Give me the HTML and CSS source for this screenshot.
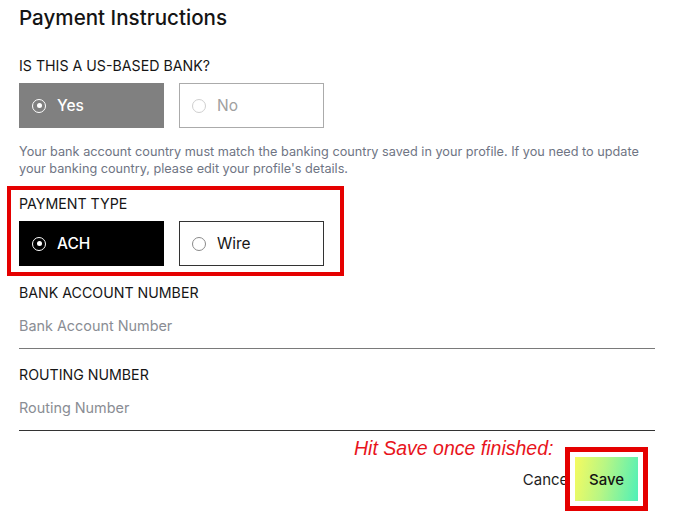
FILE: index.html
```html
<!DOCTYPE html>
<html lang="en">
<head>
<meta charset="utf-8">
<title>Payment Instructions</title>
<link rel="stylesheet" href="styles.css">
</head>
<body>
<div class="page">
  <h1 class="title">Payment Instructions</h1>

  <section class="group">
    <div class="label">IS THIS A US-BASED BANK?</div>
    <div class="options">
      <div class="option option-gray"><span class="radio radio-on"></span><span>Yes</span></div>
      <div class="option option-disabled"><span class="radio radio-light"></span><span>No</span></div>
    </div>
  </section>

  <p class="help">Your bank account country must match the banking country saved in your profile. If you need to update your banking country, please edit your profile's details.</p>

  <section class="group highlight">
    <div class="label">PAYMENT TYPE</div>
    <div class="options">
      <div class="option option-black"><span class="radio radio-on"></span><span>ACH</span></div>
      <div class="option option-outline"><span class="radio radio-off"></span><span>Wire</span></div>
    </div>
  </section>

  <div class="field field-first">
    <div class="label">BANK ACCOUNT NUMBER</div>
    <div class="input input-light">Bank Account Number</div>
  </div>

  <div class="field">
    <div class="label">ROUTING NUMBER</div>
    <div class="input input-dark">Routing Number</div>
  </div>

  <div class="annotation">Hit Save once finished:</div>

  <div class="actions">
    <button class="btn-cancel" type="button">Cancel</button>
    <div class="save-highlight">
      <button class="btn-save" type="button">Save</button>
    </div>
  </div>
</div>
</body>
</html>
```

FILE: styles.css
```css
* { box-sizing: border-box; }

html, body {
  margin: 0;
  padding: 0;
  background: #ffffff;
}

body {
  font-family: Inter, "Noto Sans", sans-serif;
  color: #161616;
}

.page {
  width: 655px;
  padding: 6px 0 0 19px;
}

.title {
  margin: 0;
  font-size: 20.6px;
  line-height: 24px;
  font-weight: 500;
  color: #141414;
}

.group {
  margin-top: 27px;
}

.label {
  font-size: 14.2px;
  line-height: 17px;
  font-weight: 400;
  color: #161616;
}

.options {
  display: flex;
  gap: 15px;
  margin-top: 9px;
}

.option {
  width: 145px;
  height: 45px;
  display: flex;
  align-items: center;
  gap: 11px;
  padding-left: 12px;
  font-size: 15.5px;
  font-weight: 500;
  border: 1px solid transparent;
}

.option-gray {
  background: #808080;
  color: #ffffff;
}

.option-disabled {
  border-color: #ababab;
  color: #a0a0a0;
  font-weight: 400;
}

.option-black {
  background: #000000;
  color: #ffffff;
}

.option-outline {
  border-color: #333333;
  color: #161616;
  font-weight: 400;
}

.radio {
  width: 14px;
  height: 14px;
  border-radius: 50%;
  flex: none;
  position: relative;
}

.radio-on {
  border: 1.5px solid #ffffff;
}

.radio-on::after {
  content: "";
  position: absolute;
  left: 50%;
  top: 50%;
  width: 5px;
  height: 5px;
  margin: -2.5px 0 0 -2.5px;
  border-radius: 50%;
  background: #ffffff;
}

.radio-light {
  border: 1px solid #cfcfcf;
}

.radio-off {
  border: 1px solid #8a8a8a;
}

.help {
  margin: 15px 0 0 0;
  font-size: 12.7px;
  line-height: 17px;
  color: #6f7584;
}

.highlight {
  margin-top: 9px;
  margin-left: -12px;
  width: 337px;
  border: 4px solid #e50000;
  padding: 5px 15px 6px 8px;
}

.field-first {
  margin-top: 8px;
}

.field + .field {
  margin-top: 17px;
}

.input {
  padding: 16px 0 14px 0;
  font-size: 14.4px;
  line-height: 17px;
  color: #8a8d94;
  border-bottom: 1px solid #7a7a7a;
}

.input-dark {
  border-bottom-color: #333333;
}

.annotation {
  margin: 6px 0 -13px 335px;
  font-family: "Liberation Sans", Arial, sans-serif;
  font-style: italic;
  font-size: 19.5px;
  line-height: 23px;
  color: #e8141c;
}

.actions {
  display: flex;
  justify-content: flex-end;
  align-items: center;
  padding-right: 7px;
}

.btn-cancel {
  background: none;
  border: 0;
  padding: 0;
  font-family: Inter, "Noto Sans", sans-serif;
  font-size: 15px;
  color: #1e1e1e;
}

.save-highlight {
  position: relative;
  z-index: 1;
  margin-left: -7px;
  border: 5px solid #e50000;
  padding: 5px;
  background: #ffffff;
}

.btn-save {
  display: block;
  width: 63px;
  height: 44px;
  border: 0;
  padding: 0;
  background: linear-gradient(100deg, #f6fb5f 0%, #b7f685 45%, #4ef0b8 100%);
  font-family: Inter, "Noto Sans", sans-serif;
  font-size: 15px;
  font-weight: 500;
  color: #141414;
}
```
